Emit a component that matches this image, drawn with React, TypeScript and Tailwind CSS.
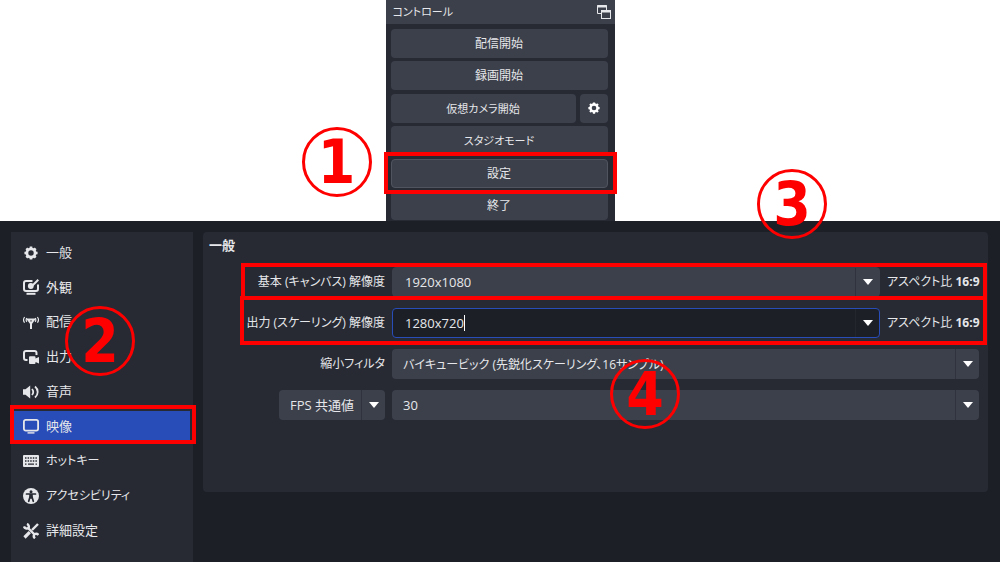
import type { ReactNode } from "react";

const frame = "pointer-events-none absolute border-4 border-[#ff0000]";

function GearIcon({ className }: { className: string }) {
  return (
    <svg viewBox="0 0 16 16" className={className} fill="none" stroke="currentColor" aria-hidden="true">
      <circle cx="8" cy="8" r="4.7" strokeWidth="3.2" />
      <path
        d="M8 .5v3M8 12.500v3M.5 8h3M12.500 8h3M2.700 2.700l2 2M11.300 11.300l2 2M2.700 13.300l2-2M11.300 4.700l2-2"
        strokeWidth="3"
      />
    </svg>
  );
}

function DisplayBrushIcon() {
  return (
    <svg viewBox="0 0 16 16" className="size-4" fill="none" stroke="currentColor" strokeWidth="2" aria-hidden="true">
      <path d="M9.500 2H3a2 2 0 0 0-2 2v6a2 2 0 0 0 2 2h10a2 2 0 0 0 2-2V5.500" />
      <path d="M9.500 6.500 15.300.7" strokeWidth="2" />
      <circle cx="7.800" cy="7" r="2.900" fill="currentColor" stroke="none" />
      <path d="M3.500 14.800h9" />
    </svg>
  );
}

function AntennaIcon() {
  return (
    <svg viewBox="0 0 16 16" className="size-4" fill="none" stroke="currentColor" strokeWidth="1.2" aria-hidden="true">
      <path d="M1.600 3c-1.300 1.700-1.300 4 0 5.700M3.800 4c-.8 1.200-.8 2.600 0 3.800M14.400 3c1.300 1.700 1.300 4 0 5.700M12.200 4c.8 1.200.8 2.600 0 3.800" />
      <path d="M5 5.500h6L8 9.500zM8 8v7" strokeWidth="2" />
    </svg>
  );
}

function OutputIcon() {
  return (
    <svg viewBox="0 0 16 16" className="size-4" fill="none" stroke="currentColor" strokeWidth="2" aria-hidden="true">
      <path d="M4.500 11H3a2 2 0 0 1-2-2V4a2 2 0 0 1 2-2h8.500a2 2 0 0 1 2 2v2" />
      <path
        d="M7 7.200h4.500a1 1 0 0 1 1 1v1.300L16 8v6.500L12.500 13v1a1 1 0 0 1-1 1H7a1 1 0 0 1-1-1V8.200a1 1 0 0 1 1-1z"
        fill="currentColor"
        stroke="none"
      />
    </svg>
  );
}

function SpeakerIcon() {
  return (
    <svg viewBox="0 0 16 16" className="size-4" fill="none" stroke="currentColor" strokeWidth="1.8" aria-hidden="true">
      <path d="M0 5.200h2.500L7.200 1.500v13L2.500 10.800H0z" fill="currentColor" stroke="none" />
      <path d="M9 5c1.500 1.800 1.500 4.200 0 6M12 2.500c3.600 3 3.600 8 0 11" />
    </svg>
  );
}

function MonitorIcon() {
  return (
    <svg viewBox="0 0 16 16" className="size-4" fill="none" stroke="currentColor" strokeWidth="1.8" aria-hidden="true">
      <rect x="0.900" y="1.900" width="14.200" height="10.700" rx="1.800" />
      <path d="M4.500 14.900h7" strokeWidth="1.4" />
    </svg>
  );
}

function KeyboardIcon() {
  return (
    <svg viewBox="0 0 16 16" className="size-4" aria-hidden="true">
      <rect y="2" width="16" height="12" rx="1" fill="currentColor" />
      <path d="M2 5h12M2 8h12" stroke="#272a33" strokeWidth="1.5" strokeDasharray="1.5 1.1" />
      <path d="M2 11.200h1.500M5 11.200h6M12.500 11.200H14" stroke="#272a33" strokeWidth="1.3" />
    </svg>
  );
}

function AccessibilityIcon() {
  return (
    <svg viewBox="0 0 16 16" className="size-4" aria-hidden="true">
      <circle cx="8" cy="8" r="8" fill="currentColor" />
      <circle cx="8" cy="3.700" r="1.500" fill="#272a33" />
      <path
        d="M3.500 6h9M8 6v4M7 9l-1.300 4.300M9 9l1.300 4.300"
        fill="none"
        stroke="#272a33"
        strokeWidth="1.7"
        strokeLinecap="round"
      />
      <path d="M6.200 6h3.600v4H6.200z" fill="#272a33" />
    </svg>
  );
}

function ToolsIcon() {
  return (
    <svg viewBox="0 0 16 16" className="size-4" fill="none" stroke="currentColor" aria-hidden="true">
      <path d="M4.500 4.500 12 12" strokeWidth="2.4" />
      <path d="M1 3.500A3 3 0 0 0 5.500 5 3 3 0 0 0 4 .9" strokeWidth="2.4" />
      <path d="M12 15.300a3 3 0 0 1-.6-4 3 3 0 0 1 4 .6" strokeWidth="2.4" />
      <path d="M15 1 9 7" strokeWidth="2.4" />
      <path d="M6.800 9.200 1.500 14.500" strokeWidth="3.2" />
    </svg>
  );
}

function DockIcon() {
  return (
    <svg viewBox="0 0 14 14" className="size-3.5" fill="none" stroke="currentColor" aria-hidden="true">
      <path d="M4 8.500H.5v-8h9V5" />
      <path d="M0 1.500h10" strokeWidth="2" />
      <rect x="4.500" y="5.500" width="9" height="8" />
      <path d="M4 6.500h10" strokeWidth="2" />
    </svg>
  );
}

function Arrow() {
  return (
    <svg viewBox="0 0 10 6" className="h-1.5 w-2.5" fill="currentColor" aria-hidden="true">
      <path d="M0 0h10L5 6z" />
    </svg>
  );
}

function Badge({ n, className }: { n: number; className: string }) {
  return (
    <div
      className={`pointer-events-none absolute z-20 flex size-[70px] items-center justify-center rounded-full border-3 border-[#ff0000] font-['DejaVu_Sans_Condensed','DejaVu_Sans',sans-serif] text-[60px] leading-none font-bold text-[#ff0000] ${className}`}
    >
      {n}
    </div>
  );
}

function DockButton({ children, className }: { children: ReactNode; className?: string }) {
  return (
    <button type="button" className={`h-[29px] w-full rounded-sm bg-[#3c404b] pt-px ${className ?? "text-xs"}`}>
      {children}
    </button>
  );
}

function ControlDock() {
  return (
    <section className="relative mx-auto w-[229px] bg-[#272a33] pb-px">
      <header className="flex h-6 items-center justify-between bg-[#3c404b] pr-1 pl-[7px] text-[11px]">
        <h2>コントロール</h2>
        <button type="button" aria-label="ドックを切り離す">
          <DockIcon />
        </button>
      </header>
      <div className="flex h-[196px] flex-col justify-between pt-[5px] pr-[7px] pl-[5px]">
        <DockButton>配信開始</DockButton>
        <DockButton>録画開始</DockButton>
        <div className="flex gap-1">
          <DockButton className="text-[11px]">仮想カメラ開始</DockButton>
          <button
            type="button"
            aria-label="仮想カメラの設定"
            className="flex w-7 shrink-0 items-center justify-center rounded-sm bg-[#3c404b] text-white"
          >
            <GearIcon className="size-3" />
          </button>
        </div>
        <DockButton className="text-[11px]">スタジオモード</DockButton>
        <div className="relative flex">
          <DockButton className="border border-[#50545f] text-xs">設定</DockButton>
          <div className={`${frame} -top-[7px] -right-[9px] -bottom-1.5 -left-[7px]`} />
        </div>
        <DockButton>終了</DockButton>
      </div>
      <Badge n={1} className="top-[127px] -left-[84px]" />
    </section>
  );
}

const categories = [
  { label: "一般", icon: <GearIcon className="size-4 p-px" /> },
  { label: "外観", icon: <DisplayBrushIcon /> },
  { label: "配信", icon: <AntennaIcon /> },
  { label: "出力", icon: <OutputIcon /> },
  { label: "音声", icon: <SpeakerIcon /> },
  { label: "映像", icon: <MonitorIcon />, active: true },
  { label: "ホットキー", icon: <KeyboardIcon />, kana: true },
  { label: "アクセシビリティ", icon: <AccessibilityIcon />, kana: true },
  { label: "詳細設定", icon: <ToolsIcon /> },
];

function Sidebar() {
  return (
    <nav className="relative w-[182px] shrink-0 bg-[#272a33] px-[3px] pt-[5px] pb-4">
      <ul className="flex h-[309px] flex-col justify-between">
        {categories.map((c) => (
          <li key={c.label} className="relative">
            <a
              href="#"
              className={`flex h-[31px] items-center gap-[7px] pl-[9px] ${c.kana ? "text-xs" : "text-[13px]"} ${c.active ? "bg-[#284cb8]" : ""}`}
            >
              {c.icon}
              {c.label}
            </a>
            {c.active && <div className={`${frame} -top-1.5 -right-1.5 -bottom-0.5 -left-1`} />}
          </li>
        ))}
      </ul>
      <Badge n={2} className="top-[74px] left-[54px]" />
    </nav>
  );
}

function Resolution({ id, label, value, focused }: { id: string; label: string; value: string; focused?: boolean }) {
  return (
    <>
      <label htmlFor={id} className="text-right whitespace-nowrap">
        {label}
      </label>
      <div className="flex items-center gap-[7px]">
        <div
          className={`flex h-[30px] flex-1 items-center rounded-sm border pl-3 ${focused ? "border-[#284cb8] bg-[#1d1f26]" : "border-[#3c404b] bg-[#3c404b]"}`}
        >
          <input id={id} defaultValue={value} className="field-sizing-content pt-px text-[13px] outline-none" />
          {focused && <span className="h-4 w-px bg-white" />}
          <button
            type="button"
            aria-label={`${label}の一覧`}
            className={`ml-auto flex h-full w-6 items-center justify-center border-l text-white ${focused ? "border-[#24262e]" : "border-[#30333d]"}`}
          >
            <Arrow />
          </button>
        </div>
        <span className="w-[92px] whitespace-nowrap">
          アスペクト比 <b>16:9</b>
        </span>
      </div>
    </>
  );
}

function Select({ id, label, value, className }: { id: string; label?: string; value: string; className?: string }) {
  return (
    <div className={`relative ${className ?? ""}`}>
      <select
        id={id}
        aria-label={label}
        className="h-[30px] w-full appearance-none rounded-sm bg-[#3c404b] pt-px pr-7 pl-[11px] outline-none"
      >
        <option>{value}</option>
      </select>
      <span className="pointer-events-none absolute inset-y-0 right-0 flex w-6 items-center justify-center border-l border-[#30333d] text-white">
        <Arrow />
      </span>
    </div>
  );
}

function VideoSettings() {
  return (
    <main className="relative mr-3 mb-[70px] flex-1 rounded-sm bg-[#272a33] pt-1 pr-[9px] pb-[72px] pl-1.5 text-xs">
      <h1 className="h-[31px] text-[13px] leading-[19px] font-bold">一般</h1>
      <div className="relative grid grid-cols-[176px_1fr] items-center gap-x-[7px] gap-y-[11px]">
        <Resolution id="base" label="基本 (キャンバス) 解像度" value="1920x1080" />
        <Resolution id="output" label="出力 (スケーリング) 解像度" value="1280x720" focused />
        <label htmlFor="filter" className="text-right">
          縮小フィルタ
        </label>
        <Select id="filter" value="バイキュービック (先鋭化スケーリング、16サンプル)" />
        <Select id="fps-type" label="FPSの種類" value="FPS 共通値" className="w-[106px] justify-self-end text-[13px]" />
        <Select id="fps" label="FPS" value="30" className="text-[13px]" />
        <div className={`${frame} -top-1 -right-2 left-8 h-[37px]`} />
        <div className={`${frame} top-[29px] -right-2 left-[31px] h-[49px]`} />
      </div>
      <Badge n={3} className="-top-[63px] right-[161px]" />
      <Badge n={4} className="top-[127px] right-[308px]" />
    </main>
  );
}

export default function App() {
  return (
    <div className="min-h-screen bg-white font-['Open_Sans','Noto_Sans_CJK_JP',sans-serif] text-[#e6e7ea] [font-feature-settings:'palt']">
      <ControlDock />
      <div className="flex gap-2.5 bg-[#1d1f26] pt-[11px] pl-[11px]">
        <Sidebar />
        <VideoSettings />
      </div>
    </div>
  );
}
